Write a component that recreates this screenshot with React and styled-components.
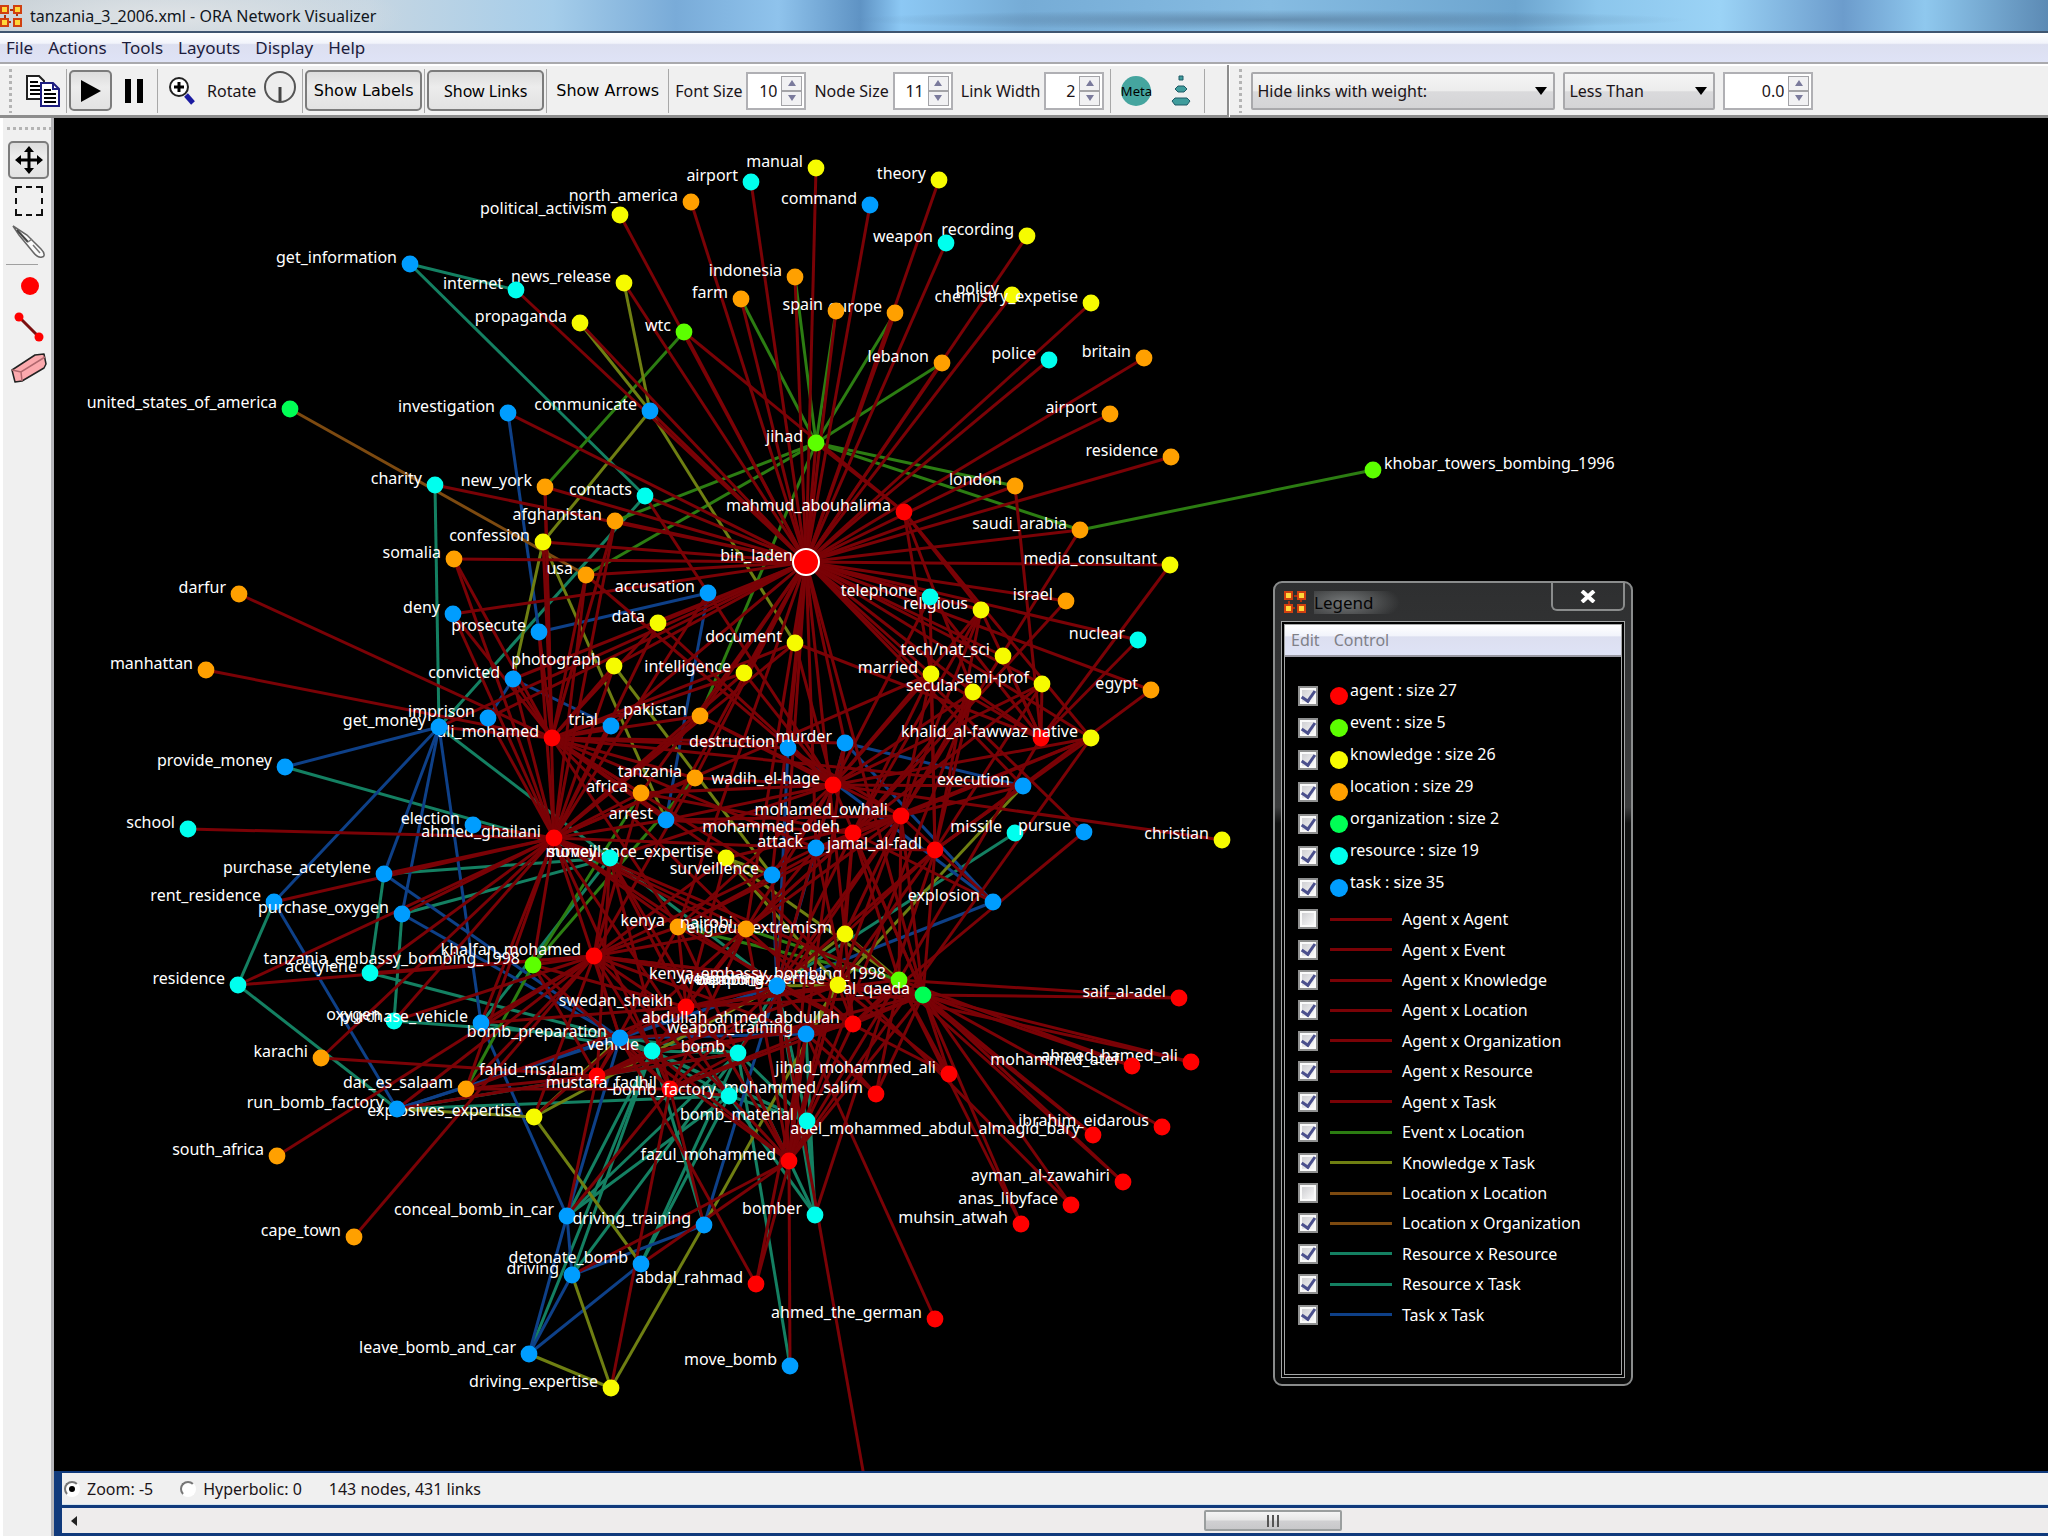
import React from 'react';

// node modules
import styled, { createGlobalStyle, css } from 'styled-components';

// canvas zoom and the part of the plane the canvas starts at
const ZOOM = 1.306;
const ORIGIN = { x: 54, y: 118 };

const px = x => Math.round(x * ZOOM - ORIGIN.x);
const py = y => Math.round(y * ZOOM - ORIGIN.y);

const NODE_COLORS = {
  agent: '#ff0000',
  event: '#5cff00',
  knowledge: '#f6fb00',
  location: '#ffa000',
  organization: '#00ff55',
  resource: '#00ffee',
  task: '#009dff'
};

const LINK_COLORS = {
  agent: '#7a0206',
  event: '#2c7d12',
  knowledge: '#6f7f12',
  organization: '#7d4a10',
  resource: '#148062',
  task: '#0e4088'
};

// id|x|y|label, the label is left out when it equals the id
const NODES = {
  agent: `mahmud_abouhalima|692|392
    khalid_al-fawwaz|797|565
    ali_mohamed|423|565
    wadih_el-hage|638|601
    ahmed_ghailani|424|642
    mohamed_owhali|690|625
    mohammed_odeh|653|638
    jamal_al-fadl|716|651
    khalfan_mohamed|455|732
    swedan_sheikh|525|771
    abdullah_ahmed_abdullah|653|784
    saif_al-adel|903|764
    ahmed_hamed_ali|912|813
    mohammed_atef|867|816
    jihad_mohammed_ali|727|822
    fahid_msalam|457|824
    mustafa_fadhil|513|834
    mohammed_salim|671|838
    ibrahim_eidarous|890|863
    adel_mohammed_abdul_almagid_bary|837|869
    fazul_mohammed|604|889
    ayman_al-zawahiri|860|905
    anas_libyface|820|923
    muhsin_atwah|782|937
    abdal_rahmad|579|983
    ahmed_the_german|716|1010
    bin_laden|617|430`,
  event: `wtc|524|254
    jihad|625|339
    khobar_towers_bombing_1996|1051|360
    tanzania_embassy_bombing_1998|408|739
    kenya_embassy_bombing_1998|688|750`,
  knowledge: `manual|625|129
    theory|719|138
    political_activism|475|165
    recording|786|181
    news_release|478|217
    propaganda|444|247
    policy|775|226
    chemistry_expetise|835|232
    confession|416|415
    media_consultant|896|433
    data|504|477
    religious|751|467
    document|609|492
    photograph|470|510
    intelligence|570|515
    tech/nat_sci|768|502
    secular|745|530
    married|713|516
    semi-prof|798|524
    native|835|565
    christian|936|643
    surveillance_expertise|556|657
    religious_extremism|647|715
    weapons_expertise|642|754
    explosives_expertise|409|855
    driving_expertise|468|1063`,
  location: `north_america|529|155
    indonesia|609|212
    farm|567|229
    europe|685|240
    spain|640|238
    lebanon|721|278
    britain|876|274
    airport_l|850|317|airport
    residence_l|897|350|residence
    new_york|417|373
    afghanistan|471|399
    london|777|372
    saudi_arabia|827|406
    somalia|348|428
    usa|449|440
    darfur|183|455
    israel|816|460
    egypt|881|528
    manhattan|158|513
    pakistan|536|548
    tanzania|532|596
    africa|491|607
    kenya|519|710
    nairobi|571|711
    karachi|246|810
    dar_es_salaam|357|834
    south_africa|212|885
    cape_town|271|947`,
  organization: `united_states_of_america|222|313
    al_qaeda|707|762`,
  resource: `airport|575|139
    weapon|724|186
    internet|395|222
    police|803|276
    charity|333|371
    contacts|494|380
    telephone|712|457
    nuclear|871|490
    school|144|635
    missile|777|638
    money|467|657
    acetylene|283|745
    residence|182|754
    oxygen|302|782
    weapons|595|755
    vehicle|499|805
    bomb|565|806
    bomb_factory|558|839
    bomb_material|618|858
    bomber|624|930`,
  task: `command|666|157
    get_information|314|202
    investigation|389|316
    communicate|498|315
    deny|347|470
    prosecute|413|484
    accusation|542|454
    convicted|393|520
    imprison|374|550
    get_money|336|557
    trial|468|556
    destruction|603|573
    murder|647|569
    provide_money|218|587
    execution|783|602
    election|362|632
    arrest|510|628
    attack|625|649
    pursue|830|637
    surveillence|591|670
    explosion|760|691
    purchase_acetylene|294|669
    rent_residence|210|691
    purchase_oxygen|308|700
    bombing|595|755
    purchase_vehicle|368|783
    bomb_preparation|475|795
    weapon_training|617|792
    run_bomb_factory|304|849
    conceal_bomb_in_car|434|931
    driving_training|539|938
    detonate_bomb|491|968
    driving|438|976
    leave_bomb_and_car|405|1037
    move_bomb|605|1046`
};

// source: targets
const LINKS = {
  resource: `get_information: internet contacts
    charity: get_money
    contacts: get_money
    money: get_money provide_money purchase_acetylene purchase_oxygen purchase_vehicle bombing
    acetylene: purchase_acetylene bomb_preparation
    oxygen: purchase_oxygen bomb_preparation
    residence: rent_residence run_bomb_factory
    missile: bombing
    vehicle: purchase_vehicle conceal_bomb_in_car driving leave_bomb_and_car bomb_preparation bomb_material
    bomb: bombing bomb_preparation run_bomb_factory conceal_bomb_in_car detonate_bomb move_bomb bomber vehicle bomb_material driving
    bomb_factory: run_bomb_factory bomb_preparation conceal_bomb_in_car detonate_bomb bomb_material
    bomb_material: bomb_preparation bombing bomber
    bomber: bombing weapon_training bomb_factory
    driving_training: vehicle`,
  task: `investigation: prosecute
    accusation: prosecute arrest
    convicted: imprison trial
    get_money: provide_money rent_residence purchase_acetylene purchase_oxygen purchase_vehicle
    murder: attack execution explosion
    destruction: bombing explosion
    attack: bombing
    surveillence: bombing
    explosion: bombing
    rent_residence: run_bomb_factory
    purchase_acetylene: bomb_preparation
    purchase_oxygen: bomb_preparation
    run_bomb_factory: bomb_preparation
    bomb_preparation: bombing weapon_training conceal_bomb_in_car
    purchase_vehicle: conceal_bomb_in_car
    bombing: driving_training run_bomb_factory
    conceal_bomb_in_car: driving leave_bomb_and_car
    driving: leave_bomb_and_car driving_training
    detonate_bomb: leave_bomb_and_car`,
  event: `jihad: indonesia farm spain europe lebanon london saudi_arabia afghanistan usa pakistan
    khobar_towers_bombing_1996: saudi_arabia
    wtc: new_york
    tanzania_embassy_bombing_1998: dar_es_salaam tanzania africa
    kenya_embassy_bombing_1998: kenya nairobi`,
  knowledge: `communicate: news_release propaganda document confession
    confession: convicted arrest
    photograph: surveillence
    surveillance_expertise: surveillence kenya_embassy_bombing_1998
    religious_extremism: bombing kenya_embassy_bombing_1998
    weapons_expertise: bombing execution weapon_training driving_training surveillance_expertise
    explosives_expertise: run_bomb_factory bomb_preparation bombing detonate_bomb
    driving_expertise: driving driving_training leave_bomb_and_car`,
  organization: 'united_states_of_america: usa',
  agent: `bin_laden: manual airport theory command north_america political_activism weapon recording internet news_release propaganda wtc indonesia farm spain europe policy chemistry_expetise lebanon police britain airport_l residence_l investigation communicate jihad charity new_york contacts afghanistan london saudi_arabia confession media_consultant somalia usa deny data telephone religious israel nuclear egypt document photograph intelligence tech/nat_sci married secular semi-prof pakistan convicted imprison get_money trial destruction murder native africa tanzania attack execution arrest surveillence pursue kenya nairobi religious_extremism bombing al_qaeda
    mahmud_abouhalima: wtc jihad married religious secular native
    khalid_al-fawwaz: london media_consultant nuclear telephone religious secular married tech/nat_sci semi-prof document kenya_embassy_bombing_1998
    ali_mohamed: new_york afghanistan usa somalia confession prosecute photograph data document intelligence convicted deny manhattan darfur trial tanzania africa pakistan kenya nairobi murder destruction arrest attack surveillance_expertise surveillence execution get_money
    ahmed_ghailani: school rent_residence purchase_acetylene purchase_oxygen residence acetylene oxygen purchase_vehicle karachi new_york usa somalia afghanistan photograph deny convicted prosecute imprison data document trial election arrest money tanzania_embassy_bombing_1998 kenya nairobi africa tanzania pakistan bombing bomb_preparation vehicle weapons_expertise bomb_factory dar_es_salaam accusation intelligence married attack al_qaeda
    wadih_el-hage: christian document murder destruction execution married secular religious semi-prof native contacts arrest tanzania africa kenya nairobi usa attack telephone al_qaeda money data pakistan surveillence bombing intelligence
    mohamed_owhali: saudi_arabia religious secular married native explosion attack arrest pakistan bombing kenya_embassy_bombing_1998 al_qaeda weapons_expertise religious_extremism nairobi execution destruction kenya surveillance_expertise bomb
    mohammed_odeh: israel religious secular married semi-prof native explosion arrest attack kenya nairobi bombing kenya_embassy_bombing_1998 al_qaeda explosives_expertise religious_extremism africa weapons_expertise
    jamal_al-fadl: egypt religious secular married telephone semi-prof execution religious_extremism al_qaeda weapons_expertise attack native bombing bomber
    khalfan_mohamed: residence acetylene oxygen purchase_vehicle south_africa cape_town dar_es_salaam kenya nairobi tanzania_embassy_bombing_1998 bombing bomb_preparation vehicle bomb bomb_factory explosives_expertise run_bomb_factory surveillance_expertise money weapons_expertise attack africa tanzania al_qaeda weapon_training
    swedan_sheikh: vehicle money purchase_vehicle bomb_preparation bombing al_qaeda kenya nairobi weapons_expertise kenya_embassy_bombing_1998 attack dar_es_salaam surveillance_expertise tanzania_embassy_bombing_1998
    abdullah_ahmed_abdullah: al_qaeda kenya_embassy_bombing_1998 bombing nairobi pursue religious_extremism weapon_training attack bomb_material vehicle bomb_preparation weapons_expertise kenya
    fahid_msalam: karachi money vehicle bombing bomb_preparation kenya dar_es_salaam weapons_expertise al_qaeda tanzania_embassy_bombing_1998 bomb conceal_bomb_in_car run_bomb_factory
    mustafa_fadhil: dar_es_salaam bomb_preparation money bombing driving_expertise weapon_training bomb_factory bomb al_qaeda vehicle tanzania_embassy_bombing_1998 conceal_bomb_in_car driving_training nairobi
    fazul_mohammed: bombing weapon_training religious_extremism weapons_expertise kenya nairobi surveillence attack vehicle bomb bomb_material bomb_factory driving detonate_bomb move_bomb al_qaeda kenya_embassy_bombing_1998 native secular money bomb_preparation murder
    saif_al-adel: al_qaeda kenya_embassy_bombing_1998
    ahmed_hamed_ali: al_qaeda weapons_expertise
    mohammed_atef: al_qaeda kenya_embassy_bombing_1998
    jihad_mohammed_ali: al_qaeda bombing kenya_embassy_bombing_1998 weapons_expertise
    mohammed_salim: al_qaeda bombing kenya_embassy_bombing_1998 weapon_training
    ibrahim_eidarous: al_qaeda
    adel_mohammed_abdul_almagid_bary: al_qaeda kenya_embassy_bombing_1998
    ayman_al-zawahiri: al_qaeda religious_extremism
    anas_libyface: al_qaeda surveillance_expertise
    muhsin_atwah: al_qaeda kenya_embassy_bombing_1998
    abdal_rahmad: bomb_preparation weapon_training weapons_expertise
    ahmed_the_german: weapon_training`
};

const nodes = Object.keys(NODES).flatMap(kind =>
  NODES[kind].split('\n').map(line => {
    const [id, x, y, label] = line.trim().split('|');
    return { id, kind, x: px(x), y: py(y), label: label || id };
  })
);

const byId = Object.fromEntries(nodes.map(n => [n.id, n]));

const links = Object.keys(LINKS).flatMap(kind =>
  LINKS[kind].split('\n').flatMap(line => {
    const [source, targets] = line.trim().split(': ');
    return targets.split(' ').map(t => ({ kind, a: byId[source], b: byId[t] }));
  })
);

const NODE_SETS = [
  ['agent', 27],
  ['event', 5],
  ['knowledge', 26],
  ['location', 29],
  ['organization', 2],
  ['resource', 19],
  ['task', 35]
];

const LINK_SETS = [
  ['Agent x Agent', 'agent', false],
  ['Agent x Event', 'agent', true],
  ['Agent x Knowledge', 'agent', true],
  ['Agent x Location', 'agent', true],
  ['Agent x Organization', 'agent', true],
  ['Agent x Resource', 'agent', true],
  ['Agent x Task', 'agent', true],
  ['Event x Location', 'event', true],
  ['Knowledge x Task', 'knowledge', true],
  ['Location x Location', 'organization', false],
  ['Location x Organization', 'organization', true],
  ['Resource x Resource', 'resource', true],
  ['Resource x Task', 'resource', true],
  ['Task x Task', 'task', true]
];

const Network = () => (
  <Plot role="img" aria-label="Network">
    {links.map(({ kind, a, b }, i) => (
      <Link key={i} $kind={kind} x1={a.x} y1={a.y} x2={b.x} y2={b.y} />
    ))}
    {/* link that leaves the visible part of the canvas */}
    <Link $kind="agent" x1={px(595)} y1={py(755)} x2={px(662)} y2={py(1135)} />
    {nodes.map(({ id, kind, x, y, label }) => {
      const right = id === 'khobar_towers_bombing_1996';
      const selected = id === 'bin_laden';
      return (
        <g key={id}>
          <circle
            cx={x}
            cy={y}
            r={selected ? 13 : 8.4}
            fill={NODE_COLORS[kind]}
            stroke={selected ? '#fff' : 'none'}
            strokeWidth="2"
          />
          <NodeLabel x={right ? x + 11 : x - 13} y={y - 1} $right={right}>
            {label}
          </NodeLabel>
        </g>
      );
    })}
  </Plot>
);

const Logo = () => (
  <svg width="22" height="22" viewBox="0 0 22 22" aria-hidden="true">
    <path d="M5 5h12v12H5z" fill="none" stroke="#b03010" strokeWidth="2" strokeDasharray="3 2" />
    {[[1, 1], [14, 1], [1, 14], [14, 14]].map(([x, y]) => (
      <rect key={`${x}-${y}`} x={x} y={y} width="7" height="7" fill="#ffd83a" stroke="#d04010" strokeWidth="2" />
    ))}
  </svg>
);

const Spinner = ({ id, label, value, wide }) => (
  <>
    {label && <ToolLabel htmlFor={id}>{label}</ToolLabel>}
    <SpinBox $wide={wide}>
      <SpinInput id={id} defaultValue={value} aria-label={label || 'Weight'} />
      <SpinButtons>
        <SpinButton aria-label="Increase">
          <svg width="8" height="6" viewBox="0 0 8 6"><path d="M4 0l4 6H0z" fill="#7a7a9c" /></svg>
        </SpinButton>
        <SpinButton aria-label="Decrease">
          <svg width="8" height="6" viewBox="0 0 8 6"><path d="M4 6l4-6H0z" fill="#7a7a9c" /></svg>
        </SpinButton>
      </SpinButtons>
    </SpinBox>
  </>
);

const DropDown = ({ label, options, width }) => (
  <SelectBox $width={width}>
    <Select aria-label={label}>
      {options.map(o => (
        <option key={o}>{o}</option>
      ))}
    </Select>
    <svg width="12" height="8" viewBox="0 0 12 8"><path d="M0 0h12L6 8z" fill="#000" /></svg>
  </SelectBox>
);

const TopToolbar = () => (
  <Toolbar>
    <Grip />
    <IconButton aria-label="Copy">
      <svg width="36" height="32" viewBox="0 0 36 32">
        <path d="M2 1h12l5 5v18H2z" fill="#fff" stroke="#222" strokeWidth="2" />
        <path d="M5 7h8M5 11h10M5 15h10M5 19h10" stroke="#000" strokeWidth="2" />
        <path d="M16 8h12l6 6v17H16z" fill="#fff" stroke="#1d1d80" strokeWidth="2" />
        <path d="M28 8v6h6" fill="none" stroke="#1d1d80" strokeWidth="2" />
        <path d="M19 15h7M19 19h12M19 23h12M19 27h12" stroke="#000" strokeWidth="2" />
      </svg>
    </IconButton>
    <Divider />
    <IconButton $pressed aria-label="Play">
      <svg width="20" height="22" viewBox="0 0 20 22"><path d="M0 0l20 11L0 22z" /></svg>
    </IconButton>
    <IconButton aria-label="Pause">
      <svg width="20" height="24" viewBox="0 0 20 24"><path d="M1 0h6v24H1zM13 0h6v24h-6z" /></svg>
    </IconButton>
    <Divider />
    <IconButton aria-label="Zoom in">
      <svg width="28" height="30" viewBox="0 0 28 30">
        <path d="M18 19l7 8" stroke="#1a1aa0" strokeWidth="5" />
        <circle cx="11" cy="11" r="9" fill="#fff" stroke="#222" strokeWidth="2" />
        <path d="M11 6v10M6 11h10" stroke="#000" strokeWidth="3" />
      </svg>
    </IconButton>
    <ToolLabel htmlFor="rotate">Rotate</ToolLabel>
    <IconButton id="rotate" $tight aria-label="Rotate">
      <svg width="34" height="42" viewBox="0 0 34 42">
        <circle cx="17" cy="17" r="15" fill="#ededed" stroke="#555" strokeWidth="2" />
        <path d="M17 17v14" stroke="#444" strokeWidth="3" />
      </svg>
    </IconButton>
    <Divider />
    <TextButton $pressed $spaced>Show Labels</TextButton>
    <Divider />
    <TextButton $pressed>Show Links</TextButton>
    <Divider />
    <TextButton $spaced>Show Arrows</TextButton>
    <Divider />
    <Spinner id="font-size" label="Font Size" value="10" />
    <Spinner id="node-size" label="Node Size" value="11" />
    <Spinner id="link-width" label="Link Width" value="2" />
    <Divider />
    <MetaButton>Meta</MetaButton>
    <IconButton aria-label="Levels">
      <svg width="20" height="32" viewBox="0 0 20 32">
        <g fill="#3f9c9c" stroke="#1f5a66" strokeWidth="1">
          <path d="M8 1h4v4H8z" />
          <path d="M7 11h6l3 3-3 3H7l-3-3z" />
          <path d="M4 23h12l3 3-3 4H4l-3-4z" />
        </g>
      </svg>
    </IconButton>
    <Divider />
    <ToolbarEnd />
    <Grip />
    <Filters>
      <DropDown label="Link filter" options={['Hide links with weight:']} width={304} />
      <DropDown label="Comparison" options={['Less Than']} width={152} />
      <Spinner id="weight" value="0.0" wide />
    </Filters>
  </Toolbar>
);

const SideToolbar = () => (
  <Sidebar>
    <SideGrip />
    <SideButton $pressed aria-label="Move">
      <svg width="28" height="28" viewBox="0 0 28 28">
        <path d="M14 3v22M3 14h22" stroke="#000" strokeWidth="3" />
        <path d="M14 0l5 6H9zM14 28l5-6H9zM0 14l6-5v10zM28 14l-6-5v10z" />
      </svg>
    </SideButton>
    <SideButton aria-label="Select area">
      <svg width="28" height="30" viewBox="0 0 28 30">
        <path d="M1 7V1h6M11 1h6M21 1h6v6M27 12v6M27 23v6h-6M17 29h-6M7 29H1v-6M1 18v-6" fill="none" stroke="#111" strokeWidth="2" />
      </svg>
    </SideButton>
    <SideButton aria-label="Blade">
      <svg width="36" height="34" viewBox="0 0 36 34">
        <path d="M2 1l14 9 14 14c4 4 4 8 1 8-3 1-6-1-9-5L8 10z" fill="#fafafa" stroke="#666" strokeWidth="1.5" />
        <path d="M6 5l11 12" stroke="#444" strokeWidth="2" />
        <path d="M17 17l4-3M22 20l7 8" stroke="#777" strokeWidth="1.5" />
      </svg>
    </SideButton>
    <SideRule />
    <SideButton aria-label="Add node">
      <svg width="20" height="20" viewBox="0 0 20 20"><circle cx="11" cy="10" r="9" fill="#f00" /></svg>
    </SideButton>
    <SideButton aria-label="Add link">
      <svg width="30" height="30" viewBox="0 0 30 30">
        <path d="M5 5l20 20" stroke="#7a1010" strokeWidth="3" />
        <circle cx="5" cy="5" r="4.5" fill="#f00" />
        <circle cx="25" cy="25" r="4.5" fill="#f00" />
      </svg>
    </SideButton>
    <SideButton aria-label="Erase">
      <svg width="36" height="30" viewBox="0 0 36 30">
        <path d="M1 17L24 2l9-1 2 10-2 4-22 13-7 1z" fill="#fba9ad" stroke="#222" strokeWidth="1.5" strokeLinejoin="round" />
        <path d="M1 17l9 2L34 4M10 19l1 9" fill="none" stroke="#b0686e" strokeWidth="1.5" />
      </svg>
    </SideButton>
  </Sidebar>
);

const Legend = () => (
  <LegendWindow>
    <LegendTitle>
      <Logo />
      <LegendName>Legend</LegendName>
      <CloseButton aria-label="Close">
        <svg width="16" height="13" viewBox="0 0 16 13">
          <path d="M2 1l12 11M14 1L2 12" stroke="#fff" strokeWidth="4" />
        </svg>
      </CloseButton>
    </LegendTitle>
    <LegendFrame>
      <LegendMenu>
        <MenuItem $dim>Edit</MenuItem>
        <MenuItem $dim>Control</MenuItem>
      </LegendMenu>
      <NodeRows>
        {NODE_SETS.map(([kind, size]) => (
          <NodeRow key={kind}>
            <Check type="checkbox" id={`set-${kind}`} defaultChecked />
            <Dot $kind={kind} />
            <NodeRowLabel htmlFor={`set-${kind}`}>{`${kind} : size ${size}`}</NodeRowLabel>
          </NodeRow>
        ))}
      </NodeRows>
      <LinkRows>
        {LINK_SETS.map(([label, kind, on]) => {
          const id = label.toLowerCase().replace(/\s/g, '-');
          return (
            <LinkRow key={id}>
              <Check type="checkbox" id={id} defaultChecked={on} />
              <Swatch $kind={kind} />
              <label htmlFor={id}>{label}</label>
            </LinkRow>
          );
        })}
      </LinkRows>
    </LegendFrame>
  </LegendWindow>
);

const App = () => (
  <Window>
    <GlobalStyle />
    <TitleBar>
      <Logo />
      <TitleText>tanzania_3_2006.xml - ORA Network Visualizer</TitleText>
    </TitleBar>
    <MenuBar>
      {['File', 'Actions', 'Tools', 'Layouts', 'Display', 'Help'].map(m => (
        <MenuItem key={m}>{m}</MenuItem>
      ))}
    </MenuBar>
    <TopToolbar />
    <Workspace>
      <SideToolbar />
      <Main>
        <Canvas>
          <Network />
          <Legend />
        </Canvas>
        <Footer>
          <StatusBar>
            <Radio type="radio" name="mode" id="zoom" defaultChecked />
            <label htmlFor="zoom">Zoom: -5</label>
            <Radio type="radio" name="mode" id="hyperbolic" />
            <label htmlFor="hyperbolic">Hyperbolic: 0</label>
            <Counts>143 nodes, 431 links</Counts>
          </StatusBar>
          <ScrollBar>
            <ScrollArrow aria-label="Scroll left">
              <svg width="6" height="10" viewBox="0 0 6 10"><path d="M6 0v10L0 5z" fill="#222" /></svg>
            </ScrollArrow>
            <ScrollTrack>
              <ScrollThumb aria-label="Scroll position">
                <svg width="14" height="12" viewBox="0 0 14 12">
                  <path d="M2 0v12M7 0v12M12 0v12" stroke="#555" strokeWidth="2" />
                </svg>
              </ScrollThumb>
            </ScrollTrack>
          </ScrollBar>
        </Footer>
      </Main>
    </Workspace>
  </Window>
);

const GlobalStyle = createGlobalStyle`
  * {
    box-sizing: border-box;
  }
  body {
    margin: 0;
    font-family: 'Noto Sans', 'Open Sans', sans-serif;
    font-size: 16px;
    color: #1b1418;
  }
  button,
  input,
  select {
    margin: 0;
    padding: 0;
    border: none;
    background: none;
    color: inherit;
    font: inherit;
  }
  svg {
    display: block;
    flex: none;
  }
`;

const Window = styled.div`
  display: flex;
  flex-direction: column;
  min-height: 100vh;
  background: #f0f0f0;
`;

const TitleBar = styled.header`
  display: flex;
  align-items: center;
  gap: 8px;
  height: 33px;
  border-bottom: 2px solid #3f5570;
  background:
    radial-gradient(ellipse 240px 40px at 8% 50%, #dfe3e6, transparent),
    radial-gradient(ellipse 420px 10px at 62% 64%, rgba(70, 100, 130, 0.5), transparent),
    linear-gradient(
      90deg,
      #c3ccd2 0%,
      #c6d6e2 18%,
      #a5cdea 27%,
      #79abd8 33%,
      #8fc3ec 38%,
      #5f93c4 42%,
      #8cc8f4 44%,
      #76acd6 50%,
      #86bce2 62%,
      #6da5cf 74%,
      #8cc6ec 78%,
      #9bd3f6 84%,
      #6c9ccc 90%,
      #8fc8ee 94%,
      #5c8ab4 100%
    );
`;

const TitleText = styled.span`
  font-size: 16px;
  line-height: 30px;
  white-space: nowrap;
  color: #10151c;
`;

const barFace = css`
  background: linear-gradient(#fff 0%, #f2f4fb 35%, #dcdff0 40%, #dfe3f6 100%);
`;

const MenuBar = styled.nav`
  display: flex;
  align-items: center;
  gap: 15px;
  height: 31px;
  padding-left: 6px;
  border-bottom: 2px solid #a9a9ad;
  ${barFace}
`;

const MenuItem = styled.button`
  font-size: ${({ $dim }) => ($dim ? 16 : 17)}px;
  line-height: 24px;
  color: ${({ $dim }) => ($dim ? '#7f8088' : '#1c1c3c')};
`;

const Toolbar = styled.div`
  display: flex;
  align-items: center;
  height: 54px;
  border-top: 2px solid #fff;
  border-bottom: 3px solid #8d8d8d;
  background: #f0f0f0;
  white-space: nowrap;
`;

const Grip = styled.div`
  width: 3px;
  height: 44px;
  margin: 0 9px;
  background: repeating-linear-gradient(#b4b4b4 0 3px, transparent 3px 6px);
`;

const Divider = styled.div`
  width: 1px;
  height: 44px;
  margin: 0 2px;
  background: #a8a8a8;
`;

const ToolbarEnd = styled.div`
  width: 3px;
  height: 52px;
  margin-left: 20px;
  border-left: 2px solid #8d8d8d;
  background: #fff;
`;

const pressedFace = css`
  border: 2px solid #7c7c7c;
  border-radius: 5px;
  background: linear-gradient(#dcdcdc, #ececec 40%, #e2e2e2);
`;

const IconButton = styled.button`
  display: flex;
  align-items: center;
  justify-content: center;
  width: ${({ $tight }) => ($tight ? 40 : 43)}px;
  height: 41px;
  ${({ $pressed }) => $pressed && pressedFace}
`;

const TextButton = styled.button`
  width: 117px;
  height: 41px;
  font-family: ${({ $spaced }) => ($spaced ? "'DejaVu Sans', sans-serif" : 'inherit')};
  color: #000;
  ${({ $pressed }) => $pressed && pressedFace}
`;

const MetaButton = styled.button`
  display: flex;
  align-items: center;
  justify-content: center;
  width: 30px;
  height: 30px;
  margin: 0 8px;
  border-radius: 50%;
  background: #45a59f;
  font-size: 13px;
  color: #000;
`;

const ToolLabel = styled.label`
  padding: 0 4px;
`;

const SpinBox = styled.div`
  display: flex;
  width: ${({ $wide }) => ($wide ? 90 : 60)}px;
  height: 38px;
  margin: 0 4px 0 0;
  padding: 2px;
  border: 2px solid #b0b0b4;
  background: #fff;
`;

const SpinInput = styled.input`
  flex: 1;
  min-width: 0;
  padding-right: 4px;
  text-align: right;
`;

const SpinButtons = styled.div`
  display: flex;
  flex-direction: column;
`;

const SpinButton = styled.button`
  display: flex;
  flex: 1;
  align-items: center;
  justify-content: center;
  width: 21px;
  border: 1px solid #a4a4a8;
  background: #f1f1f3;
`;

const Filters = styled.div`
  display: flex;
  gap: 8px;
`;

const SelectBox = styled.div`
  display: grid;
  align-items: center;
  width: ${({ $width }) => $width}px;

  > * {
    grid-area: 1 / 1;
  }

  > svg {
    justify-self: end;
    margin-right: 8px;
    pointer-events: none;
  }
`;

const Select = styled.select`
  height: 38px;
  padding: 0 4px;
  appearance: none;
  border: 2px solid #a9a9ac;
  border-radius: 2px;
  background: linear-gradient(#f5f5f5 0%, #ececec 50%, #dadadc 52%, #d4d4d6 100%);
`;

const Workspace = styled.div`
  display: flex;
  flex: 1;
`;

const Sidebar = styled.aside`
  display: flex;
  flex: none;
  flex-direction: column;
  align-items: center;
  width: 54px;
  padding: 9px 0 0 3px;
  border-left: 3px solid #fff;
  border-right: 3px solid #b5b5b9;
  background: #f0f0f0;
`;

const SideGrip = styled.div`
  width: 44px;
  height: 3px;
  margin-bottom: 11px;
  background: repeating-linear-gradient(90deg, #b4b4b4 0 3px, transparent 3px 6px);
`;

const SideButton = styled.button`
  display: flex;
  align-items: center;
  justify-content: center;
  width: 41px;
  height: 38px;
  margin-bottom: 3px;
  ${({ $pressed }) => $pressed && pressedFace}
`;

const SideRule = styled.div`
  align-self: flex-start;
  width: 32px;
  height: 1px;
  margin-bottom: 2px;
  background: #a0a0a0;
`;

const Main = styled.main`
  display: flex;
  flex: 1;
  flex-direction: column;
  min-width: 0;
`;

const Canvas = styled.section`
  position: relative;
  flex: 1;
  min-height: 960px;
  overflow: hidden;
  background: #000;
`;

const Plot = styled.svg`
  position: absolute;
  inset: 0;
  width: 100%;
  height: 100%;
`;

const Link = styled.line`
  stroke: ${({ $kind }) => LINK_COLORS[$kind]};
  stroke-width: 3px;
`;

const NodeLabel = styled.text`
  fill: #fff;
  font-size: 16px;
  text-anchor: ${({ $right }) => ($right ? 'start' : 'end')};
`;

const LegendWindow = styled.section`
  position: absolute;
  top: 463px;
  left: 1219px;
  width: 360px;
  padding: 0 6px 6px;
  border: 2px solid #8a8c8c;
  border-radius: 9px;
  background: linear-gradient(#2e2f30 0%, #3c3d3e 28%, #101111 30%, #0a0b0b 100%);
  color: #fff;
`;

const LegendTitle = styled.header`
  display: flex;
  align-items: center;
  gap: 8px;
  height: 38px;
  padding-left: 3px;
`;

const LegendName = styled.h2`
  flex: 1;
  margin: 0;
  font-size: 17px;
  font-weight: 400;
  color: #050505;
  background: radial-gradient(ellipse 56px 22px at 30px 50%, #76797a, transparent);
`;

const CloseButton = styled.button`
  display: flex;
  align-self: flex-start;
  align-items: center;
  justify-content: center;
  width: 74px;
  height: 28px;
  border: 2px solid #8a8c8c;
  border-top: none;
  border-radius: 0 0 6px 6px;
`;

const LegendFrame = styled.div`
  padding-bottom: 44px;
  border: 4px double #a4a6a6;
  background: #000;
`;

const LegendMenu = styled.nav`
  display: flex;
  gap: 14px;
  height: 32px;
  padding-left: 6px;
  align-items: center;
  border-bottom: 2px solid #9a9aa4;
  ${barFace}
`;

const NodeRows = styled.div`
  padding: 23px 0 0 13px;
`;

const NodeRow = styled.div`
  display: flex;
  align-items: center;
  height: 32px;
`;

const NodeRowLabel = styled.label`
  padding: 0 0 13px 2px;
`;

const Dot = styled.span`
  width: 18px;
  height: 18px;
  margin-left: 12px;
  border-radius: 50%;
  background: ${({ $kind }) => NODE_COLORS[$kind]};
`;

const LinkRows = styled.div`
  display: flex;
  flex-direction: column;
  height: 426px;
  padding-left: 13px;
`;

const LinkRow = styled.div`
  display: flex;
  flex: 1;
  align-items: center;
`;

const Swatch = styled.span`
  width: 62px;
  height: 3px;
  margin: 0 10px 0 12px;
  background: ${({ $kind }) => LINK_COLORS[$kind]};
`;

const Check = styled.input`
  display: grid;
  place-items: center;
  width: 20px;
  height: 20px;
  appearance: none;
  border: 2px solid #8f9090;
  outline: 2px solid #fafafa;
  outline-offset: -4px;
  background: linear-gradient(135deg, #c8c8cc, #fff);

  &:checked::after {
    content: '';
    width: 6px;
    height: 11px;
    margin-top: -3px;
    border: solid #4a4f8c;
    border-width: 0 3px 3px 0;
    transform: rotate(35deg);
  }
`;

const Footer = styled.footer`
  border: solid #103a7c;
  border-width: 2px 0 3px 8px;
`;

const StatusBar = styled.div`
  display: flex;
  align-items: center;
  gap: 7px;
  height: 32px;
  padding-left: 2px;
  border-bottom: 1px solid #d4e4ee;
`;

const Radio = styled.input`
  display: grid;
  place-items: center;
  width: 16px;
  height: 16px;
  appearance: none;
  border: 2px solid;
  border-color: #777 #fff #fff #777;
  border-radius: 50%;
  background: #fff;

  label + & {
    margin-left: 20px;
  }

  &:checked::after {
    content: '';
    width: 6px;
    height: 6px;
    border-radius: 50%;
    background: #000;
  }
`;

const Counts = styled.span`
  margin-left: 20px;
`;

const ScrollBar = styled.div`
  display: flex;
  height: 28px;
  padding: 2px 0;
  border-top: 3px solid #103a7c;
  background: #eeecec;
`;

const ScrollArrow = styled.button`
  display: flex;
  align-items: center;
  justify-content: center;
  width: 24px;
`;

const ScrollTrack = styled.div`
  display: flex;
  flex: 1;
`;

const ScrollThumb = styled.button`
  display: flex;
  align-items: center;
  justify-content: center;
  width: 138px;
  margin-left: 57%;
  border: 2px solid #9a9e9e;
  border-radius: 2px;
  background: linear-gradient(#f4f4f4 0%, #e6e6e6 48%, #d0d0d2 52%, #c8c8ca 100%);
`;

export default App;
